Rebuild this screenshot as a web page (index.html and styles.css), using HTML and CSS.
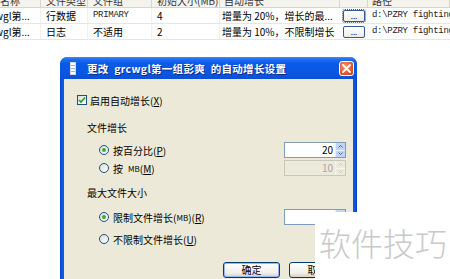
FILE: index.html
```html
<!DOCTYPE html>
<html>
<head>
<meta charset="utf-8">
<link rel="stylesheet" href="styles.css">
</head>
<body>
<div class="grid">
  <div class="row head">
    <div class="c c1"><span>名称</span></div>
    <div class="c c2"><span>文件类型</span></div>
    <div class="c c3"><span>文件组</span></div>
    <div class="c c4"><span>初始大小(MB)</span></div>
    <div class="c c5"><span>自动增长</span></div>
    <div class="c c6"></div>
    <div class="c c7"><span>路径</span></div>
  </div>
  <div class="row">
    <div class="c c1"><span class="cut">wgl第...</span></div>
    <div class="c c2">行数据</div>
    <div class="c c3 mono">PRIMARY</div>
    <div class="c c4">4</div>
    <div class="c c5"><span class="cut2">增量为 20%，增长的最...</span></div>
    <div class="c c6"><span class="dots focus">...</span></div>
    <div class="c c7 mono">d:\PZRY fighting!</div>
  </div>
  <div class="row">
    <div class="c c1"><span class="cut">wgl第...</span></div>
    <div class="c c2">日志</div>
    <div class="c c3">不适用</div>
    <div class="c c4">2</div>
    <div class="c c5"><span class="cut2">增量为 10%，不限制增长</span></div>
    <div class="c c6"><span class="dots">...</span></div>
    <div class="c c7 mono">d:\PZRY fighting!</div>
  </div>
</div>

<div class="window">
  <div class="titlebar">
    <span class="ticon"></span>
    <span class="ttext">更改 grcwgl第一组彭爽 的自动增长设置</span>
    <span class="close">
      <svg width="9" height="9" viewBox="0 0 9 9"><path d="M1 1L8 8M8 1L1 8" stroke="#fff" stroke-width="1.8" stroke-linecap="square"/></svg>
    </span>
  </div>
  <div class="body">
    <div class="line chk-row">
      <span class="chk"><svg width="8" height="8" viewBox="0 0 8 8"><path d="M1 4L3 6L7 1.5" fill="none" stroke="#21a121" stroke-width="1.6"/></svg></span>
      <span>启用自动增长(<u>X</u>)</span>
    </div>
    <div class="line grp grp1">文件增长</div>
    <div class="line opt o1">
      <span class="lbl"><span class="radio on"></span>按百分比(<u>P</u>)</span>
      <span class="spin"><span class="val">20</span><span class="arrows"><i><svg width="5" height="3" viewBox="0 0 5 3"><path d="M0.5 2.5L2.5 0.5L4.5 2.5" fill="none" stroke="currentColor" stroke-width="1"/></svg></i><i><svg width="5" height="3" viewBox="0 0 5 3"><path d="M0.5 0.5L2.5 2.5L4.5 0.5" fill="none" stroke="currentColor" stroke-width="1"/></svg></i></span></span>
    </div>
    <div class="line opt">
      <span class="lbl"><span class="radio"></span>按<span class="sp"></span><span class="small">MB</span>(<u>M</u>)</span>
      <span class="spin dis"><span class="val">10</span><span class="arrows"><i><svg width="5" height="3" viewBox="0 0 5 3"><path d="M0.5 2.5L2.5 0.5L4.5 2.5" fill="none" stroke="currentColor" stroke-width="1"/></svg></i><i><svg width="5" height="3" viewBox="0 0 5 3"><path d="M0.5 0.5L2.5 2.5L4.5 0.5" fill="none" stroke="currentColor" stroke-width="1"/></svg></i></span></span>
    </div>
    <div class="line grp grp2">最大文件大小</div>
    <div class="line opt o3">
      <span class="lbl"><span class="radio on"></span>限制文件增长(<span class="small">MB</span>)(<u>R</u>)</span>
      <span class="spin"><span class="val"></span><span class="arrows"><i><svg width="5" height="3" viewBox="0 0 5 3"><path d="M0.5 2.5L2.5 0.5L4.5 2.5" fill="none" stroke="currentColor" stroke-width="1"/></svg></i><i><svg width="5" height="3" viewBox="0 0 5 3"><path d="M0.5 0.5L2.5 2.5L4.5 0.5" fill="none" stroke="currentColor" stroke-width="1"/></svg></i></span></span>
    </div>
    <div class="line opt o4">
      <span class="lbl"><span class="radio"></span>不限制文件增长(<u>U</u>)</span>
    </div>
    <div class="btns">
      <span class="btn def">确定</span>
      <span class="btn">取消</span>
    </div>
  </div>
</div>

<div class="mark">软件技巧</div>
</body>
</html>
```

FILE: styles.css
```css
html, body {
  margin: 0;
  padding: 0;
  background: #fff;
  width: 450px;
  height: 279px;
  overflow: hidden;
  font-family: "Noto Sans CJK SC", "DejaVu Sans", sans-serif;
  font-size: 10px;
  color: #000;
}

.grid {
  width: 450px;
  overflow: hidden;
}
.row {
  display: grid;
  grid-template-columns: 41px 47px 64px 68px 120px 28px 82px;
  height: 16px;
  border-bottom: 1px solid #e6e6e6;
  box-sizing: border-box;
}
.row.head {
  height: 8px;
  background: #f4f3ee;
  border-bottom: 1px solid #d8d6cc;
}
.c {
  overflow: hidden;
  white-space: nowrap;
  line-height: 15px;
  padding-left: 5px;
  border-right: 1px solid #f0f0f0;
}
.head .c {
  border-right: 1px solid #d8d6cc;
  line-height: 8px;
  color: #333;
}
.head .c span {
  display: block;
  margin-top: -5px;
  line-height: 12px;
}
.c1 { padding-left: 0; }
.c5 { padding-left: 4px; border-right: none; }
.c6 { padding-left: 3px; border-right: none; }
.c7 { padding-left: 4px; border-right: none; }
.cut { display: inline-block; margin-left: -5px; }
.cut2 { display: inline-block; margin-left: -2px; }
.mono {
  font-family: "Liberation Mono", monospace;
  font-size: 9px;
  letter-spacing: -0.3px;
  color: #222;
}
.dots {
  display: inline-block;
  width: 22px;
  height: 12px;
  margin-top: 2px;
  box-sizing: border-box;
  border: 1px solid #2f5a94;
  border-radius: 2px;
  background: linear-gradient(#fff, #ecebe6);
  font-size: 8px;
  line-height: 9px;
  text-align: center;
  vertical-align: top;
}
.dots.focus { outline: 1px dotted #555; outline-offset: 0; }

.window {
  position: absolute;
  left: 60px;
  top: 57px;
  width: 297px;
  height: 222px;
  display: flex;
  flex-direction: column;
  background: linear-gradient(90deg, #0842c8, #0a5ae8 2px, #0a5ae8 calc(100% - 2px), #0838b8);
  border-radius: 7px 7px 0 0;
  padding: 0 4px;
  box-sizing: border-box;
  overflow: hidden;
}
.titlebar {
  height: 22px;
  flex: none;
  display: flex;
  align-items: center;
  margin: 0 -4px;
  padding: 0 3px 0 9px;
  border-radius: 7px 7px 0 0;
  background: linear-gradient(#3b8cf8 0%, #1f6ff0 10%, #0a5ae8 30%, #0a56e0 80%, #0b4fd4 100%);
  color: #fff;
}
.ticon {
  width: 4px;
  height: 11px;
  margin-left: 1px;
  background: repeating-linear-gradient(#fff 0 2px, #9bb 2px 3px);
  border: 1px solid #cfd9ee;
}
.ttext {
  margin-left: 11px;
  font-weight: bold;
  font-size: 10.5px;
  letter-spacing: 0.3px;
  word-spacing: 3px;
  text-shadow: 1px 1px 0 #0a2a8a;
  flex: 1;
  white-space: nowrap;
}
.close {
  width: 15px;
  height: 15px;
  box-sizing: border-box;
  border: 1px solid #fff;
  border-radius: 3px;
  background: radial-gradient(circle at 40% 35%, #f39a76, #e0582d 60%, #c63c14);
  display: flex;
  align-items: center;
  justify-content: center;
  margin-top: 1px;
}

.body {
  flex: 1;
  background: #ece9d8;
  display: flex;
  flex-direction: column;
  padding: 0 7px 0 0;
}
.line {
  display: flex;
  align-items: center;
  white-space: nowrap;
  flex: none;
}
.chk-row {
  height: 16px;
  margin-top: 13px;
  padding-left: 13px;
}
.chk {
  width: 10px;
  height: 10px;
  box-sizing: border-box;
  border: 1px solid #1c5180;
  background: linear-gradient(135deg, #dcdcd7, #fff);
  display: flex;
  align-items: center;
  justify-content: center;
  margin-right: 3px;
}
.grp {
  height: 16px;
  padding-left: 23px;
}
.grp1 { margin-top: 11px; }
.grp2 { margin-top: 7px; }
.opt {
  height: 18px;
  justify-content: space-between;
  padding-left: 35px;
}
.o1 { margin-top: 6px; }
.o3 { margin-top: 8px; }
.o4 { margin-top: 4px; }
.lbl {
  display: flex;
  align-items: center;
}
.sp { display: inline-block; width: 5px; }
.small { font-size: 8px; }
u { text-decoration: underline; }
.radio {
  width: 10px;
  height: 10px;
  box-sizing: border-box;
  border: 1px solid #1c5180;
  border-radius: 50%;
  background: linear-gradient(135deg, #dcdcd7, #fff);
  margin-right: 4px;
  display: flex;
  align-items: center;
  justify-content: center;
}
.radio.on::after {
  content: "";
  width: 4px;
  height: 4px;
  border-radius: 50%;
  background: #2fb32f;
}
.spin {
  width: 62px;
  height: 16px;
  box-sizing: border-box;
  border: 1px solid #7f9db9;
  background: #fff;
  display: flex;
  align-items: stretch;
}
.val {
  flex: 1;
  text-align: right;
  padding-right: 2px;
  line-height: 14px;
}
.arrows {
  width: 9px;
  display: flex;
  flex-direction: column;
  background: #c1d3fb;
  border-left: 1px solid #e6eefc;
  color: #4d6185;
}
.arrows i {
  flex: 1;
  display: flex;
  align-items: center;
  justify-content: center;
}
.arrows i + i { border-top: 1px solid #e6eefc; }
.spin.dis {
  background: #ebeadb;
  border-color: #c9c7ba;
  color: #a7a6aa;
}
.spin.dis .arrows {
  background: #ebeadb;
  color: #c9c7ba;
  border-left-color: #f5f4ee;
}
.spin.dis .arrows i + i { border-top-color: #f5f4ee; }

.btns {
  display: flex;
  justify-content: flex-end;
  gap: 9px;
  margin-top: 14px;
  flex: none;
}
.btn {
  width: 57px;
  height: 16px;
  box-sizing: border-box;
  border: 1px solid #003c74;
  border-radius: 3px;
  background: linear-gradient(#fff, #f0efea 70%, #d6d0c5);
  text-align: center;
  line-height: 14px;
}
.btn.def {
  box-shadow: inset 0 0 0 1px #97b8f3;
}

.mark {
  position: absolute;
  left: 315px;
  top: 212px;
  width: 135px;
  height: 67px;
  background: #fff;
  color: #c9c9c9;
  font-family: "Noto Sans CJK SC", sans-serif;
  font-weight: 300;
  font-size: 32px;
  line-height: 60px;
  padding-left: 4px;
  box-sizing: border-box;
  white-space: nowrap;
}
```
